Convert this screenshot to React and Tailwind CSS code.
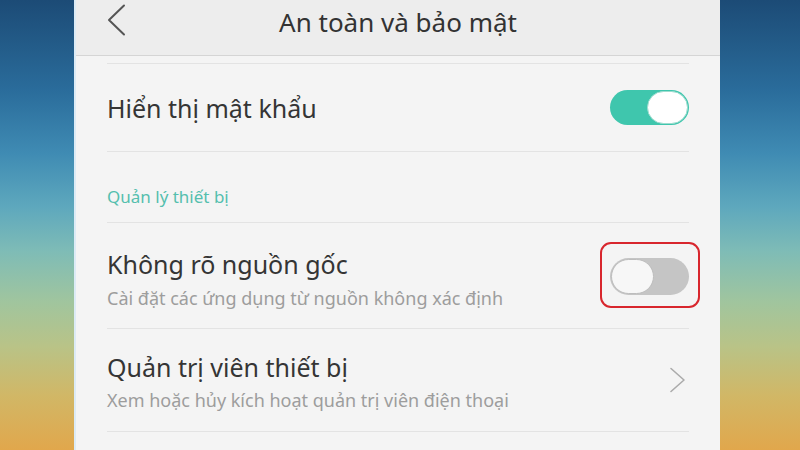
import React from "react";

const font = { fontFamily: "'Noto Sans', Roboto, sans-serif" };

function Toggle({ on, children }) {
  return (
    <div className="relative shrink-0">
      {on ? (
        <div className="w-[79px] h-[35px] rounded-full bg-[#3fc6ad] flex items-center justify-end p-[1px]">
          <div className="w-[41px] h-[33px] rounded-full bg-white border-[1.5px] border-[#9fdccf]" />
        </div>
      ) : (
        <div className="w-[79px] h-[37px] rounded-full bg-[#c5c5c5] flex items-center justify-start p-[1px]">
          <div className="w-[43px] h-[35px] rounded-full bg-[#f7f7f7] border-[1.5px] border-[#bdbdbd]" />
        </div>
      )}
      {children}
    </div>
  );
}

export default function App() {
  const side =
    "w-[74px] shrink-0 bg-[linear-gradient(180deg,#1c4b76_0%,#2a6c9b_20%,#3f8bb3_34%,#5ea8bd_46%,#7fbcb6_56%,#a0c59e_67%,#b9c387_77%,#d1b766_88%,#e1a74c_100%)]";
  return (
    <div className="w-[800px] h-[450px] flex overflow-hidden" style={font}>
      <div className={side} />
      <div className="w-[646px] shrink-0 flex flex-col bg-[#f4f4f4] border-l-2 border-[#dcebf5]">
        <div className="h-[56px] shrink-0 bg-[#ededed] border-b border-[#d5d5d5] grid grid-cols-[1fr_auto_1fr] items-start">
          <div className="pl-[31px] pt-[4px]">
            <svg width="19" height="32" viewBox="0 0 19 32" fill="none">
              <path d="M17 1.5 L2 16 L17 30.5" stroke="#555" strokeWidth="2" strokeLinecap="round" strokeLinejoin="round" />
            </svg>
          </div>
          <div className="pt-[7px] text-[26px] leading-[30px] text-[#333] whitespace-nowrap">
            An toàn và bảo mật
          </div>
          <div />
        </div>
        <div className="px-[31px] flex flex-col">
          <div className="h-[8px] border-b border-[#e3e3e3]" />
          <div className="h-[88px] border-b border-[#e3e3e3] flex items-center justify-between">
            <div className="text-[25px] leading-[28px] text-[#353535] whitespace-nowrap">Hiển thị mật khẩu</div>
            <Toggle on />
          </div>
          <div className="h-[71px] border-b border-[#e3e3e3] pt-[35px]">
            <div className="text-[17px] leading-[20px] text-[#55bfae]">Quản lý thiết bị</div>
          </div>
          <div className="h-[106px] border-b border-[#e3e3e3] flex items-start justify-between">
            <div className="pt-[27px] flex flex-col">
              <div className="text-[25px] leading-[28px] text-[#353535] whitespace-nowrap">Không rõ nguồn gốc</div>
              <div className="mt-[9px] text-[18px] leading-[22px] text-[#9d9d9d] whitespace-nowrap">
                Cài đặt các ứng dụng từ nguồn không xác định
              </div>
            </div>
            <div className="pt-[35px]">
              <Toggle on={false}>
                <div className="absolute left-[-10px] right-[-11px] top-[-16px] bottom-[-13px] rounded-[11px] border-2 border-[#d8262d]" />
              </Toggle>
            </div>
          </div>
          <div className="h-[103px] border-b border-[#e3e3e3] flex items-start justify-between">
            <div className="pt-[24px] flex flex-col">
              <div className="text-[25px] leading-[28px] text-[#353535] whitespace-nowrap">Quản trị viên thiết bị</div>
              <div className="mt-[8px] text-[18px] leading-[22px] text-[#9d9d9d] whitespace-nowrap">
                Xem hoặc hủy kích hoạt quản trị viên điện thoại
              </div>
            </div>
            <svg width="17" height="26" viewBox="0 0 17 26" fill="none" className="mr-[3px] mt-[38px]">
              <path d="M2 1.5 L15 13 L2 24.5" stroke="#ababab" strokeWidth="1.6" strokeLinecap="round" strokeLinejoin="round" />
            </svg>
          </div>
        </div>
      </div>
      <div className={side + " flex-1"} />
    </div>
  );
}
